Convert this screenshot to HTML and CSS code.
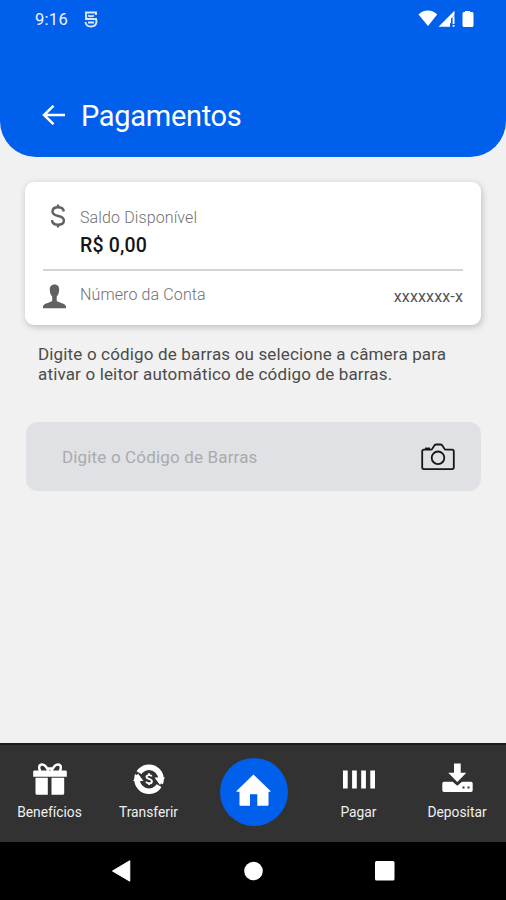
FILE: index.html
```html
<!DOCTYPE html>
<html lang="pt-BR">
<head>
<meta charset="utf-8">
<title>Pagamentos</title>
<link rel="stylesheet" href="styles.css">
</head>
<body>
<div class="screen">
  <header class="header">
    <div class="status">
      <span class="time">9:16</span>
      <svg class="app-icon" width="14" height="17" viewBox="0 0 14 17" fill="none" stroke="#dce8ff" stroke-width="1.900"><path d="M12 4V1.500H2V6q0 2 2 2h6.500q2 0 2 2c0 3.500-2.300 5.500-5.500 5.500S1.700 13.500 1.500 11M4 4.500q3 1.500 6 0M1 8h12M4 11.500h6"/></svg>
      <svg class="signals" width="56" height="18" viewBox="0 0 56 18" fill="#fff"><path d="M.5 4.500C5.500-1 14.200-1 19.200 4.500L10 16Z"/><path d="M36.500.8v4.500l-3.500 3.200v4.200l-1 .7v3.400H20.500ZM34.600 6.500h1.900V14h-1.900ZM34.600 15h1.900v1.800h-1.900Z"/><path d="M47 1h5v1h2q1.500 0 1.500 1.500v12q0 1.500-1.500 1.500h-8q-1.500 0-1.500-1.500v-12Q44.500 2 46 2h1Z"/></svg>
    </div>
    <div class="title-row">
      <svg class="back" width="24" height="20" viewBox="0 0 24 20" fill="none" stroke="#fff" stroke-width="2.500"><path d="M23 10H2M11.500.8 2 10l9.500 9.200"/></svg>
      <h1>Pagamentos</h1>
    </div>
  </header>
  <main class="content">
    <section class="card">
      <div class="balance">
        <svg class="dollar" width="14" height="24" viewBox="0 0 14 24" fill="none" stroke="#616161" stroke-width="2.400"><path d="M12.800 7.500C12.500 4.700 10.300 3.300 7 3.300S1.500 5 1.500 7.500c0 3 2.600 3.800 5.700 4.500s5.700 1.700 5.700 4.500c0 2.700-2.500 4.200-5.900 4.200s-5.900-1.700-6-4.600M7 .5v3M7 20.500v3"/></svg>
        <div>
          <div class="label">Saldo Disponível</div>
          <div class="amount">R$ 0,00</div>
        </div>
      </div>
      <div class="account">
        <svg class="person" width="23" height="25" viewBox="0 0 23 25" fill="#616161"><path d="M11.500.5c3.500 0 5 2.500 4.600 6-.2 2.500-.9 4.500-2.400 6v4c0 2 8.800 2.500 9.300 6v1.800H0v-1.800c.5-3.500 9.200-4 9.200-6v-4c-1.500-1.500-2.200-3.500-2.400-6C6.500 3 8 .5 11.500.5Z"/></svg>
        <span class="label acc-label">Número da Conta</span>
        <span class="number">xxxxxxx-x</span>
      </div>
    </section>
    <p class="hint">Digite o código de barras ou selecione a câmera para<br>ativar o leitor automático de código de barras.</p>
    <div class="field">
      <span class="placeholder">Digite o Código de Barras</span>
      <svg width="34" height="28" viewBox="0 0 34 28" fill="none" stroke="#15171a" stroke-width="1.800" stroke-linejoin="round"><path d="M3 6.700h7.200c1.800 0 2.300-5.200 4.800-5.200h4.700c2.500 0 3 5.200 4.800 5.200H31q1.800 0 1.800 1.800v15.800q0 1.800-1.800 1.800H3q-1.800 0-1.800-1.800V8.500Q1.200 6.700 3 6.700Z"/><path d="M4 5.800h5" stroke-width="2.500"/><circle cx="17" cy="14.800" r="6.300"/></svg>
    </div>
  </main>
  <nav class="tabs">
    <div class="tab t1">
      <svg width="34" height="33" viewBox="0 0 34 33" fill="#fff"><path d="M1.500 7.500h31q1.300 0 1.300 1.300v5H.2v-5q0-1.300 1.300-1.300ZM2.500 14.700h12.300v17H4q-1.500 0-1.500-1.500ZM18.500 14.700h12.700v15.500q0 1.500-1.500 1.500H18.500Z"/><path d="M15.500 8C13.500 3.500 11.500 1.500 9 1.500 5.500 1.500 5.500 6 7.500 8M18.500 8c2-4.500 4-6.500 6.500-6.500 3.500 0 3.500 4.500 1.500 6.500M13.500 5.500h7" fill="none" stroke="#fff" stroke-width="2.500"/></svg>
      <span>Benefícios</span>
    </div>
    <div class="tab t2">
      <svg width="32" height="33" viewBox="0 0 32 33"><circle cx="16" cy="16.200" r="12" fill="none" stroke="#fff" stroke-width="5.600"/><path d="M22 18.500 30.500 23.500M10 13.900 1.500 8.900" stroke="#323232" stroke-width="3"/><path d="M21.500 14.500H32L27 22ZM0 17.900h10.500L5 10.400Z" fill="#fff"/><path d="M18.700 13.400c-.5-1.700-5-1.900-5.200.5 0 2.400 5.400 1.700 5.400 4.500 0 2.600-5.200 2.400-5.700.2M16 10.300v2M16 20v2" fill="none" stroke="#fff" stroke-width="1.900"/></svg>
      <span>Transferir</span>
    </div>
    <div class="home"><svg width="35" height="32" viewBox="0 0 35 32" fill="#fff"><path d="M17.500.5 34.500 17v.8H32.500V31q0 .8-.8.800H21.300V20.300H14v11.500H4.300q-.8 0-.8-.8V17.800H.5V17Z"/></svg></div>
    <div class="tab t3">
      <svg width="32" height="33" viewBox="0 0 32 33" fill="#fff"><path d="M0 7.500h4.700v18H0ZM9.100 7.500h4.700v18H9.100ZM18.200 7.500h4.700v18h-4.700ZM27.300 7.500H32v18h-4.700Z"/></svg>
      <span>Pagar</span>
    </div>
    <div class="tab t4">
      <svg width="31" height="33" viewBox="0 0 31 33" fill="#fff"><path d="M12 .5h6.700v9.300h5.600L15.300 19 6.200 9.800H12Z"/><path fill-rule="evenodd" d="M2 18.800h8.600l4.700 4 4.700-4h9q1.700 0 1.700 1.700v6.700q0 1.700-1.700 1.700H2q-1.700 0-1.700-1.700v-6.700Q.3 18.800 2 18.800ZM20.500 23.500v2h2v-2ZM25.500 23.500v2h2v-2Z"/></svg>
      <span>Depositar</span>
    </div>
  </nav>
  <div class="system">
    <svg width="20" height="22" viewBox="0 0 20 22" fill="#fff"><path d="M18.800.7V21.200L1.500 11Z" stroke="#fff" stroke-linejoin="round"/></svg>
    <svg width="20" height="20" viewBox="0 0 20 20" fill="#fff"><circle cx="10.500" cy="10" r="9.300"/></svg>
    <svg width="20" height="20" viewBox="0 0 20 20" fill="#fff"><rect width="19.500" height="19.500" rx="1.500"/></svg>
  </div>
</div>
</body>
</html>
```
FILE: styles.css
```css
* { box-sizing: border-box; }
body { margin: 0; font-family: Roboto, "Liberation Sans", sans-serif; background: #f1f1f1; }
.screen { width: 506px; height: 900px; display: flex; flex-direction: column; overflow: hidden; background: #f1f1f1; }
.header { height: 157px; flex: none; background: #0060ec; border-radius: 0 0 36px 36px; color: #fff; padding: 10px 32px 0 35px; }
.status { display: flex; height: 18px; align-items: center; }
.time { width: 49px; font-size: 16.5px; letter-spacing: .3px; line-height: 20px; padding-top: 1px; color: #eef4ff; }
.signals { margin-left: auto; }
.title-row { display: flex; align-items: center; height: 40px; margin-top: 67px; padding-left: 7px; }
.back { margin-top: -1px; }
h1 { margin: 0 0 0 15px; font-size: 29px; font-weight: 400; line-height: 40px; letter-spacing: -.3px; white-space: nowrap; padding-top: 2px; }
.content { flex: 1; padding: 25px 25px 0; }
.card { height: 143px; border-radius: 9px; background: #fff; box-shadow: 1px 2px 7px rgba(0,0,0,.22); padding: 22px 18px 0; }
.balance { display: flex; height: 67px; border-bottom: 2px solid #d5d5d5; padding-left: 8px; }
.balance > div { margin-left: 15px; }
.label { font-size: 16px; line-height: 20px; letter-spacing: .12px; color: #707070; font-weight: 300; white-space: nowrap; }
.balance .label { margin-top: 4px; }
.amount { font-size: 19.500px; line-height: 24px; margin-top: 6px; letter-spacing: .15px; font-weight: 500; color: #151515; white-space: nowrap; }
.account { display: flex; align-items: center; height: 50px; }
.acc-label { margin-left: 14px; margin-top: -2px; }
.number { margin-left: auto; margin-top: 1px; font-size: 16px; letter-spacing: .15px; color: #555; font-weight: 400; }
.hint { margin: 19px 0 0 13px; font-size: 17px; letter-spacing: .16px; line-height: 20px; color: #4b4b4b; white-space: nowrap; }
.field { height: 69px; margin: 38px 0 0 1px; padding: 0 26px 0 36px; border-radius: 12px; background: #dfe1e4; display: flex; align-items: center; justify-content: space-between; }
.placeholder { font-size: 17px; letter-spacing: .16px; color: #a9abad; }
.tabs { height: 99px; flex: none; background: #323232; border-top: 2px solid #1c1c1c; color: #f0f0f0; display: grid; grid-template-columns: 99px 99px 111px 99px 98px; }
.tab { display: flex; flex-direction: column; align-items: center; padding-top: 18px; }
.tab span { margin-top: 7px; font-size: 13.800px; line-height: 18px; font-weight: 400; white-space: nowrap; }
.home { width: 68px; height: 68px; border-radius: 50%; background: #0060ec; margin: 13px auto 0; padding-bottom: 4px; display: flex; align-items: center; justify-content: center; }
.system { height: 58px; flex: none; background: #000; display: flex; justify-content: space-between; align-items: center; padding: 0 111px 0 111px; }
```
